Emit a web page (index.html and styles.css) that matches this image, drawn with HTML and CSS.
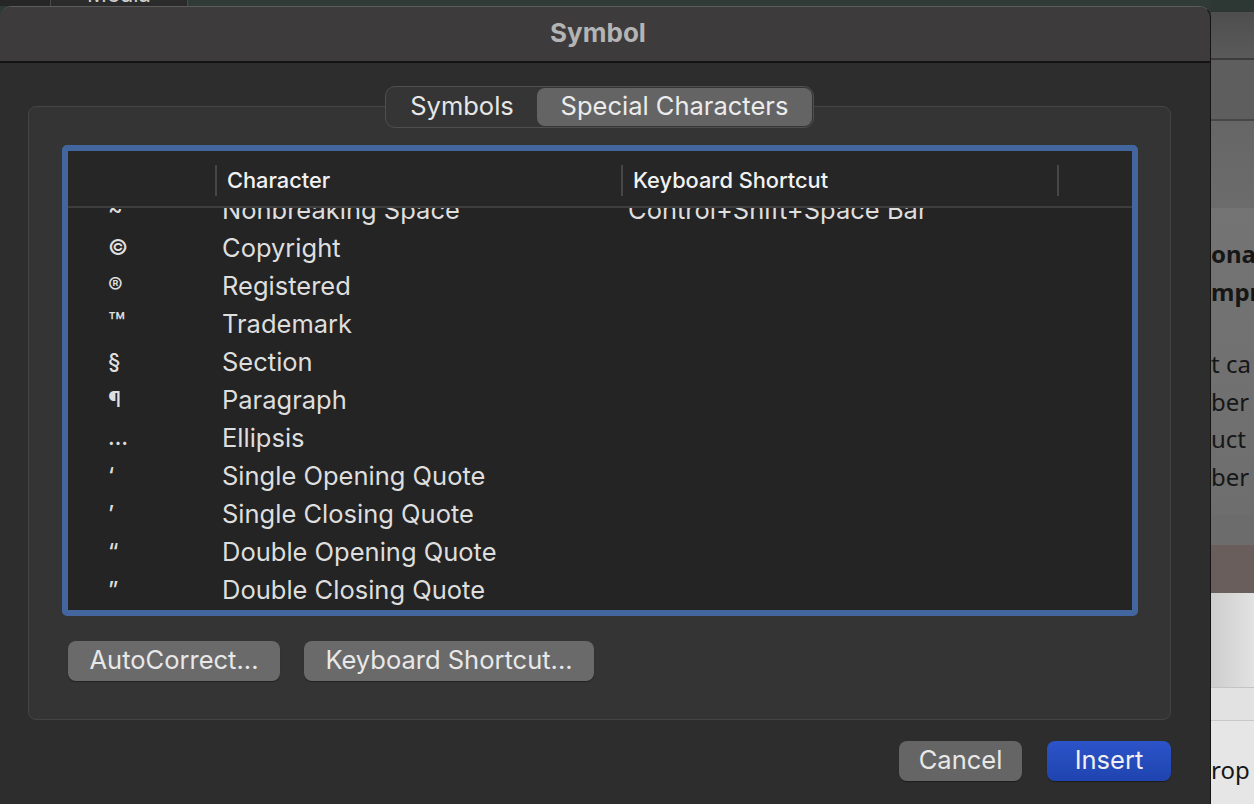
FILE: index.html
```html
<!DOCTYPE html>
<html lang="en">
<head>
    <meta charset="UTF-8">
    <meta name="viewport" content="width=device-width, initial-scale=1.0">
    <title>Symbol</title>
    <link rel="stylesheet" href="styles.css">
</head>
<body>
    <div class="screen">
        <div class="main">
            <div class="topstrip">
                <div class="strip-left"></div>
                <div class="media-tab"><span>Media</span></div>
            </div>
            <div class="dialog">
                <div class="titlebar">Symbol</div>
                <div class="dialog-body">
                    <div class="segmented">
                        <button class="seg seg-symbols">Symbols</button>
                        <button class="seg seg-special seg-active">Special Characters</button>
                    </div>
                    <div class="groupbox">
                        <div class="table">
                            <div class="thead">
                                <div class="th"></div>
                                <div class="th">Character</div>
                                <div class="th">Keyboard Shortcut</div>
                                <div class="th"></div>
                            </div>
                            <div class="tbody">
                                <div class="rows">
                                    <div class="row"><span class="sym">~</span><span class="name">Nonbreaking Space</span><span class="keys">Control+Shift+Space Bar</span></div>
                                    <div class="row"><span class="sym">©</span><span class="name">Copyright</span><span class="keys"></span></div>
                                    <div class="row"><span class="sym">®</span><span class="name">Registered</span><span class="keys"></span></div>
                                    <div class="row"><span class="sym sym-tm">™</span><span class="name">Trademark</span><span class="keys"></span></div>
                                    <div class="row"><span class="sym">§</span><span class="name">Section</span><span class="keys"></span></div>
                                    <div class="row"><span class="sym">¶</span><span class="name">Paragraph</span><span class="keys"></span></div>
                                    <div class="row"><span class="sym">…</span><span class="name">Ellipsis</span><span class="keys"></span></div>
                                    <div class="row"><span class="sym">‘</span><span class="name">Single Opening Quote</span><span class="keys"></span></div>
                                    <div class="row"><span class="sym">’</span><span class="name">Single Closing Quote</span><span class="keys"></span></div>
                                    <div class="row"><span class="sym">“</span><span class="name">Double Opening Quote</span><span class="keys"></span></div>
                                    <div class="row"><span class="sym">”</span><span class="name">Double Closing Quote</span><span class="keys"></span></div>
                                </div>
                            </div>
                        </div>
                        <div class="group-actions">
                            <button class="btn btn-autocorrect">AutoCorrect...</button>
                            <button class="btn btn-shortcut">Keyboard Shortcut...</button>
                        </div>
                    </div>
                    <div class="footer">
                        <button class="btn btn-cancel">Cancel</button>
                        <button class="btn btn-primary">Insert</button>
                    </div>
                </div>
            </div>
        </div>

        <!-- document window peeking out behind the dialog -->
        <div class="behind">
            <div class="b-top"></div>
            <div class="b-bar1"></div>
            <div class="b-bar2"></div>
            <div class="b-bar3"></div>
            <div class="b-text">
                <div class="b-bold">ona</div>
                <div class="b-bold">mpr</div>
                <div class="b-para">
                    <div>t ca</div>
                    <div>ber</div>
                    <div>uct</div>
                    <div>ber</div>
                </div>
            </div>
            <div class="b-mid"></div>
            <div class="b-brown"></div>
            <div class="b-light"></div>
            <div class="b-light2"></div>
            <div class="b-last">rop</div>
        </div>
    </div>
</body>
</html>
```

FILE: styles.css
```css
body {
    margin: 0;
    background: #2d2d2d;
    font-family: Inter, "Noto Sans", sans-serif;
}

.screen {
    display: flex;
    width: 1254px;
    height: 804px;
    overflow: hidden;
}

.main {
    width: 1211px;
    display: flex;
    flex-direction: column;
    background: #2f3935;
}

.topstrip {
    height: 6px;
    display: flex;
    background: #303a36;
}

.strip-left {
    width: 50px;
    background: #262626;
}

.media-tab {
    width: 136px;
    background: #2b2b2b;
    border-left: 1px solid #4a4a4a;
    border-right: 1px solid #4a4a4a;
    overflow: hidden;
    text-align: center;
    color: #cfcfcf;
    font-size: 22px;
}

.media-tab span {
    display: block;
    margin-top: -14px;
    line-height: 16px;
}

.dialog {
    flex: 1;
    display: flex;
    flex-direction: column;
    background: #2d2d2d;
    border-radius: 12px 12px 0 0;
    border-top: 1px solid #5c5c5c;
    border-right: 1px solid #141414;
    overflow: hidden;
}

.titlebar {
    height: 56px;
    background: #3d3b3c;
    border-bottom: 2px solid #141414;
    display: flex;
    align-items: center;
    justify-content: center;
    padding: 0 14px 3px 0;
    box-sizing: border-box;
    font-size: 26px;
    font-weight: 700;
    color: #b4b4b4;
}

.dialog-body {
    padding: 23px 39px 0 28px;
}

/* Symbols / Special Characters switch */
.segmented {
    position: relative;
    z-index: 1;
    display: flex;
    width: fit-content;
    height: 42px;
    box-sizing: border-box;
    margin: 0 auto -22px;
    padding: 1px;
    background: #353535;
    border: 1px solid #4f4f4f;
    border-radius: 10px;
}

.seg {
    border: none;
    background: transparent;
    border-radius: 8px;
    font-family: inherit;
    font-size: 25.5px;
    color: #e6e6e6;
    padding: 0 0 3px;
}

.seg-symbols {
    width: 150px;
}

.seg-special {
    width: 275px;
}

.seg-active {
    background: #646464;
    color: #ececec;
}

.groupbox {
    background: #343434;
    border: 1px solid #444;
    border-radius: 8px;
    padding: 38px 32px 38px 33px;
}

.table {
    height: 471px;
    box-sizing: border-box;
    display: flex;
    flex-direction: column;
    border: 6px solid #42669d;
    border-radius: 5px;
    background: #242424;
}

.thead,
.row {
    display: grid;
    grid-template-columns: 147px 406px 436px 1fr;
}

.thead {
    position: relative;
    z-index: 1;
    padding: 14px 0 10px;
    background: #262626;
    border-bottom: 2px solid #3d3d3d;
}

.th {
    height: 31px;
    line-height: 31px;
    padding-left: 10px;
    font-size: 21.8px;
    font-weight: 500;
    color: #f2f2f2;
}

.th + .th {
    border-left: 2px solid #474747;
}

.tbody {
    flex: 1;
    overflow: hidden;
}

.rows {
    margin-top: -18px;
}

.row {
    height: 38px;
    align-items: center;
    font-size: 25.5px;
    color: #dedede;
}

.sym {
    padding-left: 40px;
    font-size: 22px;
    font-weight: 500;
}

.sym-tm {
    font-size: 28px;
    line-height: 20px;
}

.name,
.keys {
    padding-left: 7px;
    white-space: nowrap;
}

.group-actions {
    display: flex;
    gap: 24px;
    margin-top: 25px;
    padding-left: 6px;
}

.btn {
    height: 40px;
    padding: 0 0 3px;
    border: none;
    border-radius: 8px;
    background: #6a6a6a;
    color: #e8e8e8;
    font-family: inherit;
    font-size: 25.5px;
    box-shadow: 0 1px 1px rgba(0, 0, 0, 0.35);
}

.btn-autocorrect {
    width: 212px;
}

.btn-shortcut {
    width: 290px;
}

.footer {
    display: flex;
    justify-content: flex-end;
    gap: 25px;
    margin-top: 21px;
}

.btn-cancel {
    width: 123px;
    background: #656565;
}

.btn-primary {
    width: 124px;
    background: linear-gradient(#2c54c8, #1f44b0);
    color: #f0f0f0;
}

/* window behind the dialog */
.behind {
    flex: 1;
    display: flex;
    flex-direction: column;
    overflow: hidden;
    font-family: "Noto Sans", sans-serif;
    font-size: 24px;
    color: #161616;
    white-space: nowrap;
}

.b-top {
    height: 12px;
    background: #2d3834;
}

.b-bar1 {
    height: 46px;
    background: linear-gradient(#4e4e4e, #5a5a5a);
    border-bottom: 2px solid #3c3c3c;
}

.b-bar2 {
    height: 59px;
    background: #5e5e5e;
    border-bottom: 2px solid #474747;
}

.b-bar3 {
    height: 87px;
    background: linear-gradient(#666, #6c6c6c);
}

.b-text {
    height: 307px;
    box-sizing: border-box;
    padding-top: 27px;
    background: linear-gradient(#747474, #6e6e6e);
    line-height: 38px;
}

.b-bold {
    font-weight: 700;
}

.b-para {
    margin-top: 34px;
    line-height: 37.5px;
}

.b-mid {
    height: 30px;
    background: #6c6c6c;
}

.b-brown {
    height: 48px;
    background: #695e5b;
}

.b-light {
    height: 94px;
    background: linear-gradient(90deg, #cdcdcd, #e2e2e2);
    border-bottom: 1px solid #c4c4c4;
}

.b-light2 {
    height: 32px;
    background: #e2e2e2;
    border-bottom: 1px solid #c8c8c8;
}

.b-last {
    flex: 1;
    padding-top: 30px;
    line-height: 38px;
    background: #e6e6e6;
}
```
